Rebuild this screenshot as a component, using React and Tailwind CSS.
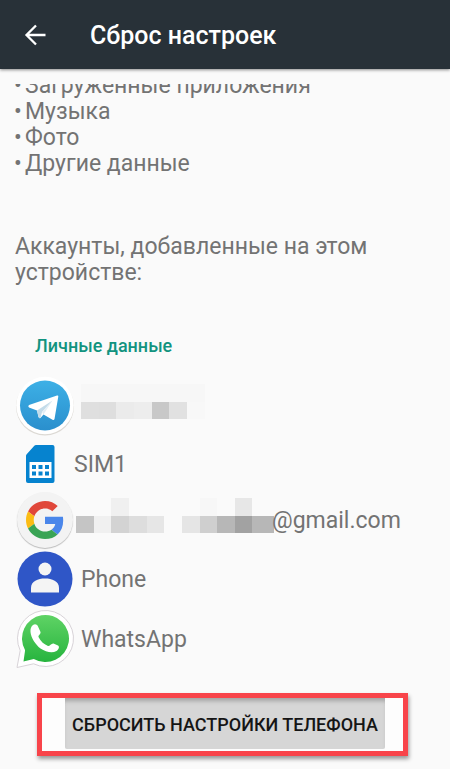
const wiped = ["Загруженные приложения", "Музыка", "Фото", "Другие данные"];

function TelegramIcon() {
  return (
    <svg viewBox="0 0 60 60" className="size-[60px]" aria-hidden="true">
      <defs>
        <linearGradient id="tg" x1="0" y1="0" x2="0" y2="1">
          <stop offset="0" stopColor="#3db0e6" />
          <stop offset="1" stopColor="#2a8fcd" />
        </linearGradient>
      </defs>
      <circle cx="30" cy="30.5" r="29" fill="#dcd9d4" />
      <circle cx="30" cy="29.5" r="28.8" fill="#fff" />
      <circle cx="30" cy="29.5" r="25" fill="url(#tg)" />
      <path d="M14 29 42 19.500Q43.500 19 43.300 20.500L39.500 43Q39 44.500 37.500 43.700L28.500 38.500 25.500 42Q24 42.500 23.500 41L22 34.500 14 31.500Q12.500 30 14 29z" fill="#fff" />
      <path d="M22 34.500 37.500 24.500 27 36 25.500 42Q24 42.500 23.500 41z" fill="#c3dbe9" />
      <path d="M27 36 37.500 24.500 28.500 38.500z" fill="#e3eef5" />
    </svg>
  );
}

function SimIcon() {
  return (
    <svg viewBox="0 0 30 38" className="h-[38px] w-[30px]" aria-hidden="true">
      <path
        d="M11 0H27.5Q29.5 0 29.5 2V36Q29.5 38 27.5 38H3Q1 38 1 36V11Q1 10 1.7 9.300L9.300 .8Q10 0 11 0z"
        fill="#0683cf"
      />
      <rect x="4.500" y="17" width="22" height="16" fill="#fff" />
      {[7, 13.5, 20].map((x) =>
        [20, 26.5].map((y) => (
          <rect key={`${x}-${y}`} x={x} y={y} width="4" height="4" fill="#0683cf" />
        )),
      )}
    </svg>
  );
}

function GoogleIcon() {
  return (
    <span className="flex size-[56px] items-center justify-center rounded-full bg-[#f3f3f3] shadow-[0_1px_1px_#bbb]">
      <svg viewBox="0 0 48 48" className="size-[38px]" aria-hidden="true">
        <path
          fill="#e0473a"
          d="M24 9.500c3.540 0 6.710 1.220 9.210 3.600l6.850-6.850C35.900 2.380 30.470 0 24 0 14.620 0 6.510 5.380 2.560 13.220l7.980 6.190C12.430 13.720 17.740 9.500 24 9.500z"
        />
        <path
          fill="#4a86ea"
          d="M46.980 24.550c0-1.570-.15-3.090-.38-4.550H24v9.020h12.940c-.58 2.960-2.260 5.480-4.780 7.180l7.730 6c4.510-4.180 7.090-10.360 7.090-17.650z"
        />
        <path
          fill="#fbbc14"
          d="M10.530 28.590c-.48-1.450-.76-2.990-.76-4.590s.27-3.140.76-4.590l-7.980-6.190C.92 16.460 0 20.120 0 24c0 3.880.92 7.540 2.560 10.780l7.970-6.190z"
        />
        <path
          fill="#3aa455"
          d="M24 48c6.480 0 11.930-2.130 15.890-5.810l-7.730-6c-2.150 1.450-4.920 2.300-8.160 2.300-6.260 0-11.570-4.220-13.470-9.910l-7.980 6.190C6.510 42.620 14.620 48 24 48z"
        />
      </svg>
    </span>
  );
}

function ContactIcon() {
  return (
    <svg viewBox="0 0 56 56" className="size-[56px]" aria-hidden="true">
      <circle cx="28" cy="28" r="27.500" fill="#2f56c7" />
      <circle cx="28" cy="18" r="6.500" fill="#f4f4f4" />
      <path d="M14 41.500V37C14 30 21 27.500 28 27.500S42 30 42 37V41.500z" fill="#f4f4f4" />
    </svg>
  );
}

function WhatsAppIcon() {
  return (
    <svg viewBox="0 0 60 60" className="size-[60px]" aria-hidden="true">
      <defs>
        <linearGradient id="wa" x1="0" y1="0" x2="0" y2="1">
          <stop offset="0" stopColor="#5fd365" />
          <stop offset="1" stopColor="#27b43e" />
        </linearGradient>
      </defs>
      <path
        d="M5.200 41.500A28 28 0 1 1 18.500 54.800L2 58.500z"
        fill="#fff"
        stroke="#d8d3d8"
      />
      <path d="M10.100 41.200A23.500 23.500 0 1 1 18.800 49.900L8.500 52.500z" fill="url(#wa)" />
      <path
        d="M18 16C20 14.500 22 15.500 22.800 17L25.500 23C26 25 23 26.500 23.500 28 25.500 32.500 29.500 35.500 33 37 34.500 37.500 36.500 34 38.500 34.500L43 36.500C45 37.500 43.500 41 41.500 42 37 44.500 31 43 25.500 39.500 20.500 35.500 16 29 15.500 23 15.300 20 16 17.500 18 16z"
        fill="#fff"
      />
    </svg>
  );
}

function TelegramMask() {
  return (
    <div className="grid grid-cols-[18px_17px_18px_18px_17px_18px_18px] grid-rows-[18px_17px]">
      <i className="col-span-7 bg-[#f7f7f7]" />
      <i className="bg-[#dfdfdf]" />
      <i className="bg-[#dedede]" />
      <i className="bg-[#ebebeb]" />
      <i className="bg-[#ededed]" />
      <i className="bg-[#c8c8c8]" />
      <i className="bg-[#e1e1e1]" />
      <i className="bg-[#f8f8f8]" />
    </div>
  );
}

function EmailMask() {
  return (
    <div className="grid grid-cols-[18px_17px_18px_18px_17px_18px_18px_17px_18px_17px_22px] grid-rows-[18px_17px]">
      <i className="col-start-3 bg-[#f0f0f0]" />
      <i className="col-start-8 bg-[#f7f7f7]" />
      <i className="col-start-10 bg-[#e7e7e7]" />
      <i className="row-start-2 bg-[#c5c5c5]" />
      <i className="row-start-2 bg-[#f0f0f0]" />
      <i className="row-start-2 bg-[#d3d3d3]" />
      <i className="row-start-2 bg-[#dddddd]" />
      <i className="row-start-2 bg-[#e6e6e6]" />
      <i className="row-start-2" />
      <i className="row-start-2 bg-[#e5e5e5]" />
      <i className="row-start-2 bg-[#cfcfcf]" />
      <i className="row-start-2 bg-[#b7b7b7]" />
      <i className="row-start-2 bg-[#a2a2a2]" />
      <i className="row-start-2 bg-[#b7b7b7]" />
    </div>
  );
}

export default function App() {
  return (
    <div className="min-h-screen bg-[#fafafa] font-['Roboto',sans-serif] text-[23px] leading-[26px] text-[#737373]">
      <header className="flex h-[69px] items-center gap-[42px] bg-[#283138] pt-[2px] pl-[24px] text-white shadow-[0_1px_3px_#888]">
        <button type="button" aria-label="Назад" className="pb-[2px]">
          <svg viewBox="0 0 24 24" className="size-[24px]" fill="none" stroke="currentColor" strokeWidth="2.300">
            <path d="M21.500 12H3M12 2.500 2.500 12 12 21.500" />
          </svg>
        </button>
        <h1 className="text-[25px] font-medium">Сброс настроек</h1>
      </header>

      <main className="pt-[15px] pb-[13px]">
        <div className="overflow-hidden px-[14px]">
          <ul className="-mt-[11px]">
            {wiped.map((item) => (
              <li key={item} className="flex">
                <span className="w-[11px]">•</span>
                <span>{item}</span>
              </li>
            ))}
          </ul>
        </div>

        <p className="mt-[57px] px-[15px]">Аккаунты, добавленные на этом устройстве:</p>

        <h2 className="mt-[47px] px-[35px] text-[18px] font-medium text-[#12937f]">Личные данные</h2>

        <ul className="mt-[17px] px-[15px]">
          <li className="flex h-[60px] items-center gap-[6px]">
            <TelegramIcon />
            <div className="pb-[9px]">
              <TelegramMask />
            </div>
          </li>
          <li className="flex h-[55px] items-center gap-[19px] pl-[10px]">
            <SimIcon />
            <span className="pt-[2px]">SIM1</span>
          </li>
          <li className="flex h-[58px] items-center pl-[2px]">
            <GoogleIcon />
            <div className="ml-[3px] -mr-[2px] pb-[9px]">
              <EmailMask />
            </div>
            <span className="pt-[2px]">@gmail.com</span>
          </li>
          <li className="flex h-[60px] items-center gap-[8px] pl-[2px]">
            <ContactIcon />
            <span className="pt-[2px]">Phone</span>
          </li>
          <li className="flex h-[60px] items-center gap-[6px]">
            <WhatsAppIcon />
            <span className="pt-[2px]">WhatsApp</span>
          </li>
        </ul>

        <div className="mt-[24px] mr-[42px] ml-[37px] border-[5px] border-[#f8444a] bg-[#fdfdfd] pr-[18px] pb-[2px] pl-[23px] shadow-[1px_3px_4px_#999]">
          <button
            type="button"
            className="h-[51px] w-full rounded-b-[2px] bg-[#d6d6d6] pt-[3px] text-[18px] font-medium whitespace-nowrap text-[#151515] shadow-[inset_0_5px_4px_-2px_#a3a3a3]"
          >
            СБРОСИТЬ НАСТРОЙКИ ТЕЛЕФОНА
          </button>
        </div>
      </main>
    </div>
  );
}
